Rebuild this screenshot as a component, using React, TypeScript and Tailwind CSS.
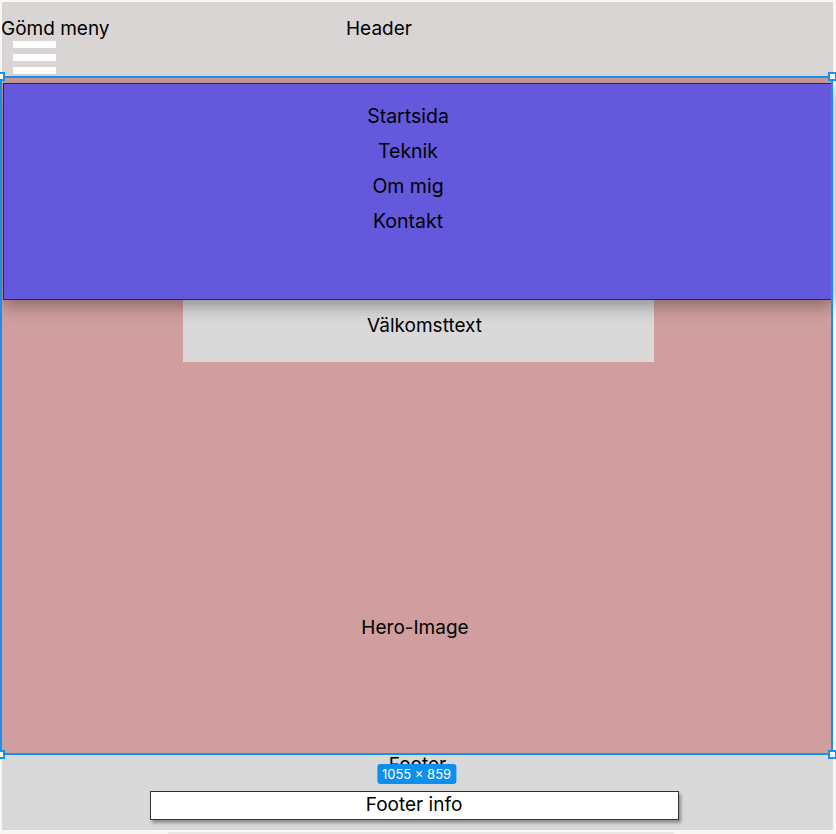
const navItems = ['Startsida', 'Teknik', 'Om mig', 'Kontakt'];

const Handle = ({ className }: { className: string }) => (
    <div className={`absolute w-[9px] h-[9px] bg-white border-2 border-[#1a8fe8] ${className}`} />
);

const App = () => {
    return (
        <div className="min-h-screen w-full bg-[#f9f7f6] font-['Inter',sans-serif] text-[19px] text-black overflow-hidden">
            {/* header */}
            <header className="ml-[2px] mt-[2px] w-[831px] h-[74px] bg-[#d9d5d4] relative">
                <div className="flex items-start">
                    <span className="leading-[28px] pt-[13px] w-[345px] -ml-[1px]">Gömd meny</span>
                    <span className="leading-[28px] pt-[13px]">Header</span>
                </div>
                <div className="ml-[11px] -mt-[2px] flex flex-col gap-[6px]">
                    <div className="w-[43px] h-[7px] bg-white" />
                    <div className="w-[43px] h-[7px] bg-white" />
                    <div className="w-[43px] h-[7px] bg-white" />
                </div>
            </header>

            {/* hero */}
            <section className="relative w-[833px] h-[679px] bg-[#d09e9e] pt-[7px] pl-[3px]">
                <nav className="relative z-[1] w-[830px] h-[217px] bg-[#6459dd] border border-[#2b2b2b] shadow-[0_6px_16px_rgba(0,0,0,0.35)] pt-[18px] pr-[20px] flex flex-col items-center gap-[7px] text-[19.5px]">
                    {navItems.map((item) => (
                        <a key={item} className="leading-[28px]">{item}</a>
                    ))}
                </nav>
                <div className="ml-[180px] w-[471px] h-[62px] bg-[#d9d9d9] pt-[12px] pl-[12px] text-center leading-[28px]">
                    Välkomsttext
                </div>
                <div className="mt-[252px] text-center leading-[28px] pr-[6px]">Hero-Image</div>

                {/* selection overlay */}
                <div className="absolute inset-0 border-2 border-[#1a8fe8] pointer-events-none z-10" />
                <Handle className="-left-[4px] -top-[4px] z-20" />
                <Handle className="-right-[4px] -top-[4px] z-20" />
                <Handle className="-left-[4px] -bottom-[4px] z-20" />
                <Handle className="-right-[4px] -bottom-[4px] z-20" />
                <div className="absolute left-1/2 -translate-x-1/2 -bottom-[29px] z-20 bg-[#0d8fee] text-white text-[13px] leading-[20px] px-[5px] rounded-[3px]">
                    1055 × 859
                </div>
            </section>

            {/* footer */}
            <footer className="ml-[2px] w-[831px] h-[75px] bg-[#d9d9d9] flex flex-col items-center">
                <span className="leading-[22px] -mt-[1px]">Footer</span>
                <div className="ml-[-7px] mt-[15px] w-[529px] h-[29px] bg-white border border-[#333] shadow-[2px_3px_3px_rgba(0,0,0,0.35)] text-center leading-[25px]">
                    Footer info
                </div>
            </footer>
            <div className="ml-[168px] mt-[2px] w-[506px] h-[2px] rounded-t bg-[#e9e7e6]" />
        </div>
    );
};

export default App;
